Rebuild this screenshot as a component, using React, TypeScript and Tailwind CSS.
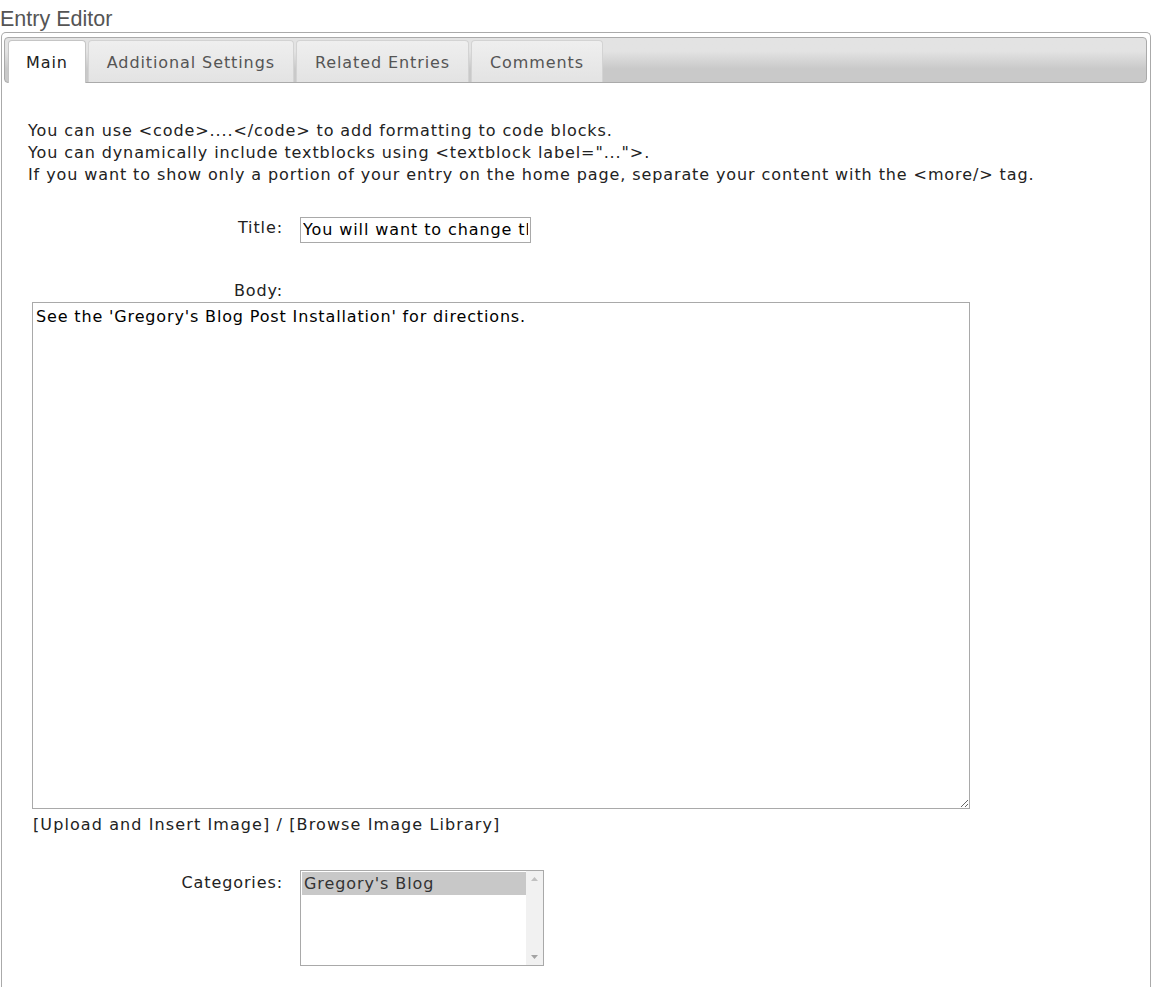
import { useState } from "react";

const tabs = ["Main", "Additional Settings", "Related Entries", "Comments"];

const App = () => {
  const [active, setActive] = useState(0);
  return (
    <div className="min-h-screen w-full bg-white font-['DejaVu_Sans',Verdana,sans-serif] text-[16px] tracking-[0.9px] text-[#222]">
      <h1 className="h-[32px] pt-[7px] font-['Liberation_Sans',Arial,sans-serif] text-[21.5px] leading-[24px] tracking-normal text-[#555]">
        Entry Editor
      </h1>
      <div className="ml-[1px] mr-[6px] min-h-[960px] rounded-t-[5px] border border-b-0 border-[#aaa] pt-[4px] pl-[2px] pr-[3px]">
        {/* tab header */}
        <div className="flex h-[46px] items-end gap-[2px] rounded-[4px] border border-[#aaa] bg-gradient-to-b from-[#e3e3e3] from-30% to-[#c9c9c9] to-70% pl-[3px]">
          {tabs.map((tab, index) => {
            const isActive = active === index;
            return (
              <button
                key={tab}
                onClick={() => setActive(index)}
                className={
                  isActive
                    ? "relative z-10 -mb-px flex h-[43px] items-center rounded-t-[4px] border border-b-0 border-[#c5c5c5] bg-white px-[17px] pt-[2px] text-[#212121]"
                    : "flex h-[42px] items-center rounded-t-[4px] border border-b-0 border-[#d3d3d3] bg-gradient-to-b from-[#efefef] to-[#e3e3e3] px-[18px] pt-[2px] text-[#555]"
                }
              >
                {tab}
              </button>
            );
          })}
        </div>

        <div className="pl-[24px] pt-[37px] leading-[22px]">
          <p>You can use &lt;code&gt;....&lt;/code&gt; to add formatting to code blocks.</p>
          <p>You can dynamically include textblocks using &lt;textblock label="..."&gt;.</p>
          <p>
            If you want to show only a portion of your entry on the home page, separate your content with the
            &lt;more/&gt; tag.
          </p>
        </div>

        {/* title */}
        <div className="mt-[31px] flex items-start">
          <label className="w-[279px] pt-[1px] text-right leading-[20px]">Title:</label>
          <input
            defaultValue="You will want to change this title"
            className="ml-[17px] h-[26px] w-[231px] border border-[#a9a9a9] px-[2px] pb-[2px] text-[16px] tracking-[0.9px] text-black outline-none"
          />
        </div>

        {/* body */}
        <div className="mt-[37px] w-[279px] text-right leading-[22px]">Body:</div>
        <textarea
          defaultValue="See the 'Gregory's Blog Post Installation' for directions."
          className="ml-[28px] block h-[507px] w-[938px] border border-[#a9a9a9] px-[3px] py-[3px] text-[16px] leading-[22px] tracking-[0.85px] text-black outline-none"
        />
        <div className="mt-[5px] pl-[29px] leading-[22px] tracking-[1.1px] text-[#222]">
          <a className="cursor-pointer">[Upload and Insert Image]</a> / <a className="cursor-pointer">[Browse Image Library]</a>
        </div>

        {/* categories */}
        <div className="mt-[34px] flex items-start">
          <label className="w-[279px] pt-[2px] text-right leading-[22px]">Categories:</label>
          <div className="ml-[17px] flex h-[96px] w-[244px] border border-[#a9a9a9]">
            <div className="flex-1 pt-[1px] pl-[1px]">
              <div className="h-[23px] bg-[#c8c8c8] pl-[2px] leading-[23px] text-[#333]">Gregory's Blog</div>
            </div>
            <div className="flex w-[17px] flex-col items-center justify-between bg-[#f1f1f1] py-[6px]">
              <svg width="7" height="4" viewBox="0 0 7 4">
                <path d="M0 4 L3.5 0 L7 4 Z" fill="#c1c1c1" />
              </svg>
              <svg width="7" height="4" viewBox="0 0 7 4">
                <path d="M0 0 L3.5 4 L7 0 Z" fill="#a3a3a3" />
              </svg>
            </div>
          </div>
        </div>
      </div>
    </div>
  );
};

export default App;
